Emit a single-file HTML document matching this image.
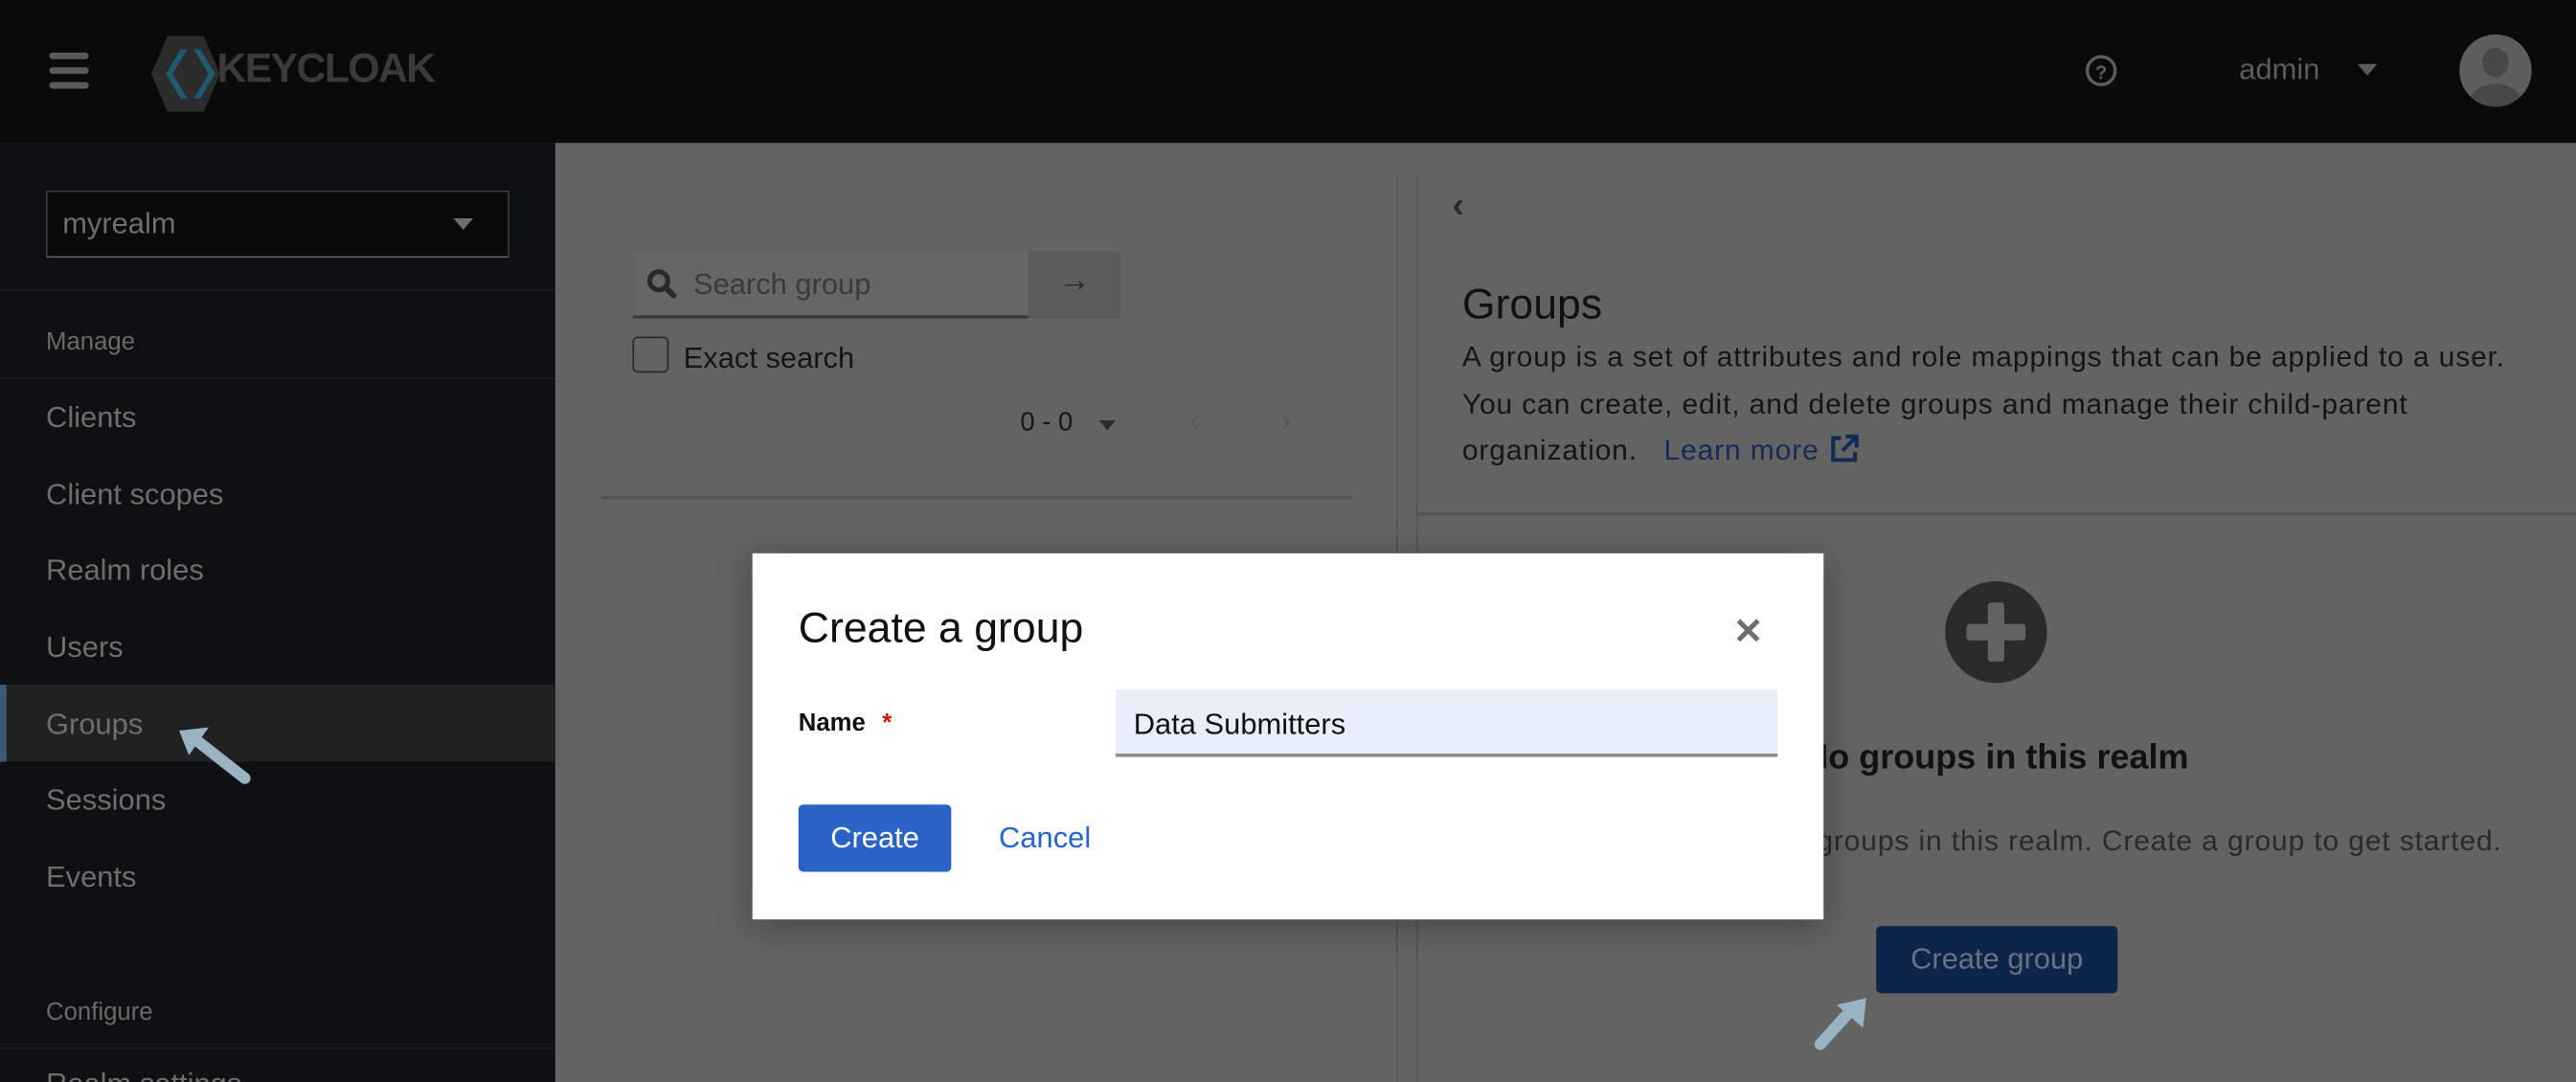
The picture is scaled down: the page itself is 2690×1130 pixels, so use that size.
<!DOCTYPE html>
<html><head><meta charset="utf-8"><style>
*{margin:0;padding:0;box-sizing:border-box}
html,body{width:2690px;height:1130px;overflow:hidden;background:#636363}
#s{position:absolute;left:0;top:0;width:1568px;height:659px;transform-origin:0 0;transform:scale(1.71556,1.7147);font-family:"Liberation Sans",sans-serif;background:#636363;overflow:hidden}
.a{position:absolute;white-space:nowrap}
.nav{color:#6e6e6e;font-size:18px}
</style></head><body><div id="s">
<div class="a" style="left:0;top:0;width:1568px;height:87px;background:#0a0a0a"></div>
<div class="a" style="left:30px;top:32px;width:24px;height:4px;background:#5a5a5a;border-radius:2px"></div>
<div class="a" style="left:30px;top:41px;width:24px;height:4px;background:#5a5a5a;border-radius:2px"></div>
<div class="a" style="left:30px;top:50px;width:24px;height:4px;background:#5a5a5a;border-radius:2px"></div>
<svg class="a" style="left:88px;top:20px" width="50" height="50" viewBox="0 0 50 50"><polygon points="14,2 36,2 46,25 36,48 14,48 4,25" fill="#2c2c2c"/><polygon points="26,10 17,25 26,40 22,40 13,25 22,10" fill="#1f5a70"/><polygon points="30,10 39,25 30,40 34,40 43,25 34,10" fill="#1f5a70"/></svg>
<div class="a" style="left:132px;top:28px;font-size:25px;font-weight:bold;color:#3a3a3a;letter-spacing:-1px">KEYCLOAK</div>
<svg class="a" style="left:1269px;top:33px" width="20" height="20" viewBox="0 0 20 20"><circle cx="10" cy="10" r="8.5" fill="none" stroke="#5c5c5c" stroke-width="2"/><text x="10" y="15" font-size="12" font-weight="bold" text-anchor="middle" fill="#5c5c5c" font-family="Liberation Sans">?</text></svg>
<div class="a" style="left:1363px;top:32px;font-size:18px;color:#5c5c5c">admin</div>
<div class="a" style="left:1435px;top:39px;width:0;height:0;border-left:6px solid transparent;border-right:6px solid transparent;border-top:7px solid #5c5c5c"></div>
<svg class="a" style="left:1497px;top:21px" width="44" height="44" viewBox="0 0 44 44"><clipPath id="c"><circle cx="22" cy="22" r="22"/></clipPath><circle cx="22" cy="22" r="22" fill="#5e5e5e"/><g clip-path="url(#c)" fill="#484848"><ellipse cx="22" cy="17" rx="8" ry="9"/><ellipse cx="22" cy="42" rx="16" ry="12"/></g></svg>

<div class="a" style="left:0;top:87px;width:338px;height:572px;background:#0f1013;overflow:hidden">
<div class="a nav" style="left:28px;top:563px">Realm settings</div></div>
<div class="a" style="left:28px;top:116px;width:282px;height:41px;background:#0a0a0a;border:1px solid #3a3a3a;border-bottom-color:#5a5a5a"></div>
<div class="a nav" style="left:38px;top:126px">myrealm</div>
<div class="a" style="left:276px;top:133px;border-left:6px solid transparent;border-right:6px solid transparent;border-top:7px solid #6e6e6e"></div>
<div class="a" style="left:0;top:176px;width:338px;height:1px;background:#1c1d20"></div>
<div class="a" style="left:28px;top:200px;font-size:15px;color:#6a6a6a">Manage</div>
<div class="a" style="left:0;top:230px;width:338px;height:1px;background:#1c1d20"></div>
<div class="a nav" style="left:28px;top:244px">Clients</div>
<div class="a nav" style="left:28px;top:291px">Client scopes</div>
<div class="a nav" style="left:28px;top:337px">Realm roles</div>
<div class="a nav" style="left:28px;top:384px">Users</div>
<div class="a" style="left:0;top:417px;width:338px;height:47px;background:#202123"></div>
<div class="a" style="left:0;top:417px;width:4px;height:47px;background:#3c5878"></div>
<div class="a nav" style="left:28px;top:431px">Groups</div>
<div class="a nav" style="left:28px;top:477px">Sessions</div>
<div class="a nav" style="left:28px;top:524px">Events</div>
<div class="a" style="left:28px;top:608px;font-size:15px;color:#6a6a6a">Configure</div>
<div class="a" style="left:0;top:638px;width:338px;height:1px;background:#1c1d20"></div>
<svg class="a" style="left:105px;top:440px" width="52" height="40" viewBox="0 0 52 40"><path d="M44 34 L16 12" stroke="#9ab3c3" stroke-width="7" stroke-linecap="round"/><polygon points="4,5 22,3 10,20" fill="#9ab3c3"/></svg>

<div class="a" style="left:385px;top:153px;width:241px;height:41px;background:#666;border-bottom:2px solid #3a3a3a"></div>
<svg class="a" style="left:393px;top:163px" width="20" height="20" viewBox="0 0 20 20"><circle cx="8" cy="8" r="5.5" fill="none" stroke="#2a2a2a" stroke-width="3"/><path d="M12 12 L17 17" stroke="#2a2a2a" stroke-width="3.5" stroke-linecap="round"/></svg>
<div class="a" style="left:422px;top:163px;font-size:18px;color:#3a3a3a">Search group</div>
<div class="a" style="left:626px;top:153px;width:56px;height:41px;background:#5c5c5c"></div>
<div class="a" style="left:644px;top:160px;font-size:20px;color:#2a2a2a;font-weight:bold">→</div>
<div class="a" style="left:385px;top:205px;width:22px;height:22px;border:1.5px solid #2a2a2a;border-radius:3px"></div>
<div class="a" style="left:416px;top:208px;font-size:18px;color:#151515">Exact search</div>
<div class="a" style="left:621px;top:249px;font-size:16px;color:#151515">0 - 0</div>
<div class="a" style="left:669px;top:256px;border-left:5px solid transparent;border-right:5px solid transparent;border-top:6px solid #2a2a2a"></div>
<div class="a" style="left:724px;top:246px;font-size:18px;color:#575757">‹</div>
<div class="a" style="left:780px;top:246px;font-size:18px;color:#575757">›</div>
<div class="a" style="left:366px;top:302px;width:457px;height:2px;background:#555"></div>
<div class="a" style="left:850px;top:107px;width:1px;height:552px;background:#555"></div>
<div class="a" style="left:862px;top:107px;width:1px;height:552px;background:#555"></div>

<div class="a" style="left:884px;top:112px;font-size:22px;color:#2a2a2a;font-weight:bold">‹</div>
<div class="a" style="left:890px;top:170px;font-size:26px;color:#111">Groups</div>
<div class="a" style="left:890px;top:203px;font-size:17.5px;letter-spacing:0.5px;color:#151515;line-height:28.5px">A group is a set of attributes and role mappings that can be applied to a user.<br>You can create, edit, and delete groups and manage their child-parent<br>organization. &nbsp; <span style="color:#142c55">Learn more</span>
<svg style="vertical-align:-3px" width="19" height="19" viewBox="0 0 20 20"><path d="M8 3H3v14h14v-5" fill="none" stroke="#142c55" stroke-width="2.5"/><path d="M11 2h7v7M18 2 9 11" fill="none" stroke="#142c55" stroke-width="2.5"/></svg></div>
<div class="a" style="left:863px;top:312px;width:705px;height:2px;background:#555"></div>
<svg class="a" style="left:1184px;top:354px" width="62" height="62" viewBox="0 0 62 62"><circle cx="31" cy="31" r="31" fill="#2b2b2d"/><rect x="26" y="13" width="10" height="36" rx="2" fill="#636363"/><rect x="13" y="26" width="36" height="10" rx="2" fill="#636363"/></svg>
<div class="a" style="left:862px;width:706px;text-align:center;top:450px;font-size:21px;color:#111;font-weight:bold">No groups in this realm</div>
<div class="a" style="right:45px;text-align:right;top:502px;font-size:17.5px;letter-spacing:0.5px;color:#2a2a2a">There are no groups in this realm. Create a group to get started.</div>
<div class="a" style="left:1142px;top:564px;width:147px;height:41px;background:#0e254a;border-radius:3px;color:#6a7282;font-size:18px;text-align:center;line-height:41px">Create group</div>
<svg class="a" style="left:1100px;top:606px" width="40" height="36" viewBox="0 0 40 36"><path d="M8 30 L26 10" stroke="#9ab3c3" stroke-width="7" stroke-linecap="round"/><polygon points="36,2 34,20 18,6" fill="#9ab3c3"/></svg>

<div class="a" style="left:458px;top:337px;width:652px;height:223px;background:#fff;box-shadow:0 4px 20px rgba(0,0,0,.3)"></div>
<div class="a" style="left:486px;top:367px;font-size:26px;color:#111">Create a group</div>
<div class="a" style="left:1055px;top:372px;font-size:22px;color:#6a6e73;font-weight:bold">✕</div>
<div class="a" style="left:486px;top:432px;font-size:15px;color:#111;font-weight:bold">Name <span style="color:#c9190b;margin-left:6px">*</span></div>
<div class="a" style="left:679px;top:420px;width:403px;height:41px;background:#e8effb;border-bottom:2px solid #8a8d90"></div>
<div class="a" style="left:690px;top:431px;font-size:18px;color:#111">Data Submitters</div>
<div class="a" style="left:486px;top:490px;width:93px;height:41px;background:#2b63c9;border-radius:3px;color:#fff;font-size:18px;text-align:center;line-height:41px">Create</div>
<div class="a" style="left:608px;top:500px;font-size:18px;color:#2563d0">Cancel</div>
</div></body></html>
